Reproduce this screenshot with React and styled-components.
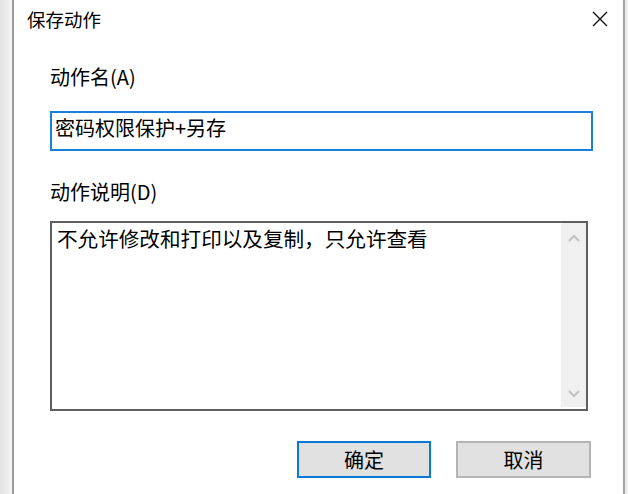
import React from 'react';
import styled, { createGlobalStyle } from 'styled-components';

const GlobalStyle = createGlobalStyle`
  html, body {
    margin: 0;
    padding: 0;
    background: #ececec;
    overflow: hidden;
  }
  body {
    font-family: "Noto Sans CJK SC", "Liberation Sans", sans-serif;
    color: #000;
  }
`;

const Frame = styled.div`
  display: flex;
  width: 628px;
  height: 494px;
`;

const LeftEdge = styled.div`
  width: 12px;
  background: linear-gradient(to right, #e4e4e4, #f3f3f3);
  border-right: 2px solid #9c9c9c;
`;

const RightEdge = styled.div`
  width: 3px;
  background: #ededed;
  border-left: 2px solid #a3a3a3;
`;

const Dialog = styled.div`
  flex: 1;
  display: flex;
  flex-direction: column;
  background: #fff;
`;

const TitleBar = styled.div`
  height: 38px;
  display: flex;
  align-items: center;
  justify-content: space-between;
  padding: 0 15px 0 13px;
`;

const Title = styled.span`
  font-size: 18.5px;
  line-height: 1;
`;

const CloseButton = styled.button`
  width: 16px;
  height: 16px;
  padding: 0;
  border: none;
  background: none;
  display: flex;
  align-items: center;
  justify-content: center;
`;

const Body = styled.div`
  display: flex;
  flex-direction: column;
  padding: 0 30px 0 36px;
`;

const Label = styled.div`
  font-size: 20px;
  line-height: 24px;
  margin-top: ${p => p.$top}px;
`;

const TextBox = styled.div`
  box-sizing: border-box;
  height: 40px;
  margin-top: 22px;
  border: 2px solid #1a7fd9;
  padding: 3px 3px 0;
  font-size: 20px;
  line-height: 24px;
  white-space: nowrap;
`;

const MemoBox = styled.div`
  box-sizing: border-box;
  height: 190px;
  margin: 17px 5px 0 0;
  border: 2px solid #5f5f5f;
  display: flex;
`;

const MemoText = styled.div`
  flex: 1;
  padding: 3px 5px 0;
  font-size: 20.6px;
  line-height: 24px;
`;

const ScrollBar = styled.div`
  width: 25px;
  margin-bottom: 2px;
  background: #f0f0f0;
  display: flex;
  flex-direction: column;
  justify-content: space-between;
  align-items: center;
  padding: 11px 0 9px;
`;

const ButtonRow = styled.div`
  display: flex;
  justify-content: flex-end;
  gap: 25px;
  margin: 30px 2px 0 0;
`;

const Button = styled.button`
  box-sizing: border-box;
  width: ${p => p.$width}px;
  height: 37px;
  background: #e1e1e1;
  border: 2px solid ${p => (p.$primary ? '#0a78d6' : '#b4b4b4')};
  font-family: "Noto Sans CJK SC", "Liberation Sans", sans-serif;
  font-size: 20px;
  line-height: 1;
  color: #000;
  padding: 0;
`;

const Chevron = ({ up }) => (
  <svg width="12" height="8" viewBox="0 0 12 8">
    <path
      d={up ? 'M1 7 L6 2 L11 7' : 'M1 1 L6 6 L11 1'}
      fill="none"
      stroke="#c2c2c2"
      strokeWidth="2"
    />
  </svg>
);

export default function App() {
  return (
    <Frame>
      <GlobalStyle />
      <LeftEdge />
      <Dialog>
        <TitleBar>
          <Title>保存动作</Title>
          <CloseButton aria-label="关闭">
            <svg width="16" height="16" viewBox="0 0 16 16">
              <path d="M1 1 L15 15 M15 1 L1 15" stroke="#111" strokeWidth="1.4" />
            </svg>
          </CloseButton>
        </TitleBar>
        <Body>
          <Label $top={27}>动作名(A)</Label>
          <TextBox>密码权限保护+另存</TextBox>
          <Label $top={29}>动作说明(D)</Label>
          <MemoBox>
            <MemoText>不允许修改和打印以及复制，只允许查看</MemoText>
            <ScrollBar>
              <Chevron up />
              <Chevron />
            </ScrollBar>
          </MemoBox>
          <ButtonRow>
            <Button $primary $width={134}>确定</Button>
            <Button $width={135}>取消</Button>
          </ButtonRow>
        </Body>
      </Dialog>
      <RightEdge />
    </Frame>
  );
}
